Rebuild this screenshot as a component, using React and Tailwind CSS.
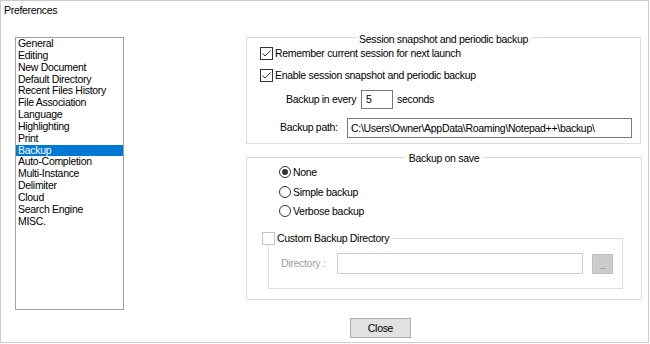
import React from 'react';

const pages = [
  'General',
  'Editing',
  'New Document',
  'Default Directory',
  'Recent Files History',
  'File Association',
  'Language',
  'Highlighting',
  'Print',
  'Backup',
  'Auto-Completion',
  'Multi-Instance',
  'Delimiter',
  'Cloud',
  'Search Engine',
  'MISC.',
];

function CheckBox({ checked, light }) {
  return (
    <span
      className={
        'w-[13px] h-[13px] shrink-0 bg-white border flex items-center justify-center ' +
        (light ? 'border-[#c4c4c4]' : 'border-[#333333]')
      }
    >
      {checked && (
        <svg width="11" height="11" viewBox="0 0 11 11">
          <polyline points="1.5,5.5 4,8 9.5,2.5" fill="none" stroke="#333333" strokeWidth="1" />
        </svg>
      )}
    </span>
  );
}

function Radio({ selected }) {
  return (
    <span className="w-[12px] h-[12px] shrink-0 rounded-full border border-[#333333] bg-white flex items-center justify-center">
      {selected && <span className="w-[6px] h-[6px] rounded-full bg-[#333333]" />}
    </span>
  );
}

function GroupTitle({ children, className }) {
  return (
    <div className={'absolute left-1/2 -translate-x-1/2 bg-white px-[3px] leading-[14px] whitespace-nowrap ' + className}>
      {children}
    </div>
  );
}

export default function App() {
  return (
    <div className="w-[650px] h-[344px] bg-white text-black font-['Liberation_Sans',Arial,sans-serif] text-[10.5px] tracking-[-0.3px]">
      <div className="w-[649px] h-[343px] border border-[#cbcbcb] flex flex-col">
        {/* Title */}
        <div className="h-[36px] pt-[2px] pl-[3px] leading-[14px]">Preferences</div>

        <div className="flex items-start">
          {/* Page list */}
          <div className="ml-[14px] w-[109px] h-[273px] border border-[#a0a0a0] bg-white">
            {pages.map((p) => (
              <div
                key={p}
                className={
                  'h-[11.85px] leading-[11.85px] pl-[2px] whitespace-nowrap ' +
                  (p === 'Backup' ? 'bg-[#0078d7] text-white' : '')
                }
              >
                {p}
              </div>
            ))}
          </div>

          {/* Right side */}
          <div className="ml-[122px] w-[396px] flex flex-col">
            {/* Session snapshot */}
            <div className="relative w-[395px] h-[107px] border border-[#dcdcdc] pl-[13px] pt-[8px]">
              <GroupTitle className="top-[-6px]">Session snapshot and periodic backup</GroupTitle>
              <div className="flex items-center gap-[2px] h-[14px] leading-[14px]">
                <CheckBox checked />
                <span>Remember current session for next launch</span>
              </div>
              <div className="flex items-center gap-[2px] h-[14px] leading-[14px] mt-[8px]">
                <CheckBox checked />
                <span>Enable session snapshot and periodic backup</span>
              </div>
              <div className="flex items-center h-[19px] mt-[8px] ml-[26px]">
                <span className="w-[75px]">Backup in every</span>
                <div className="w-[32px] h-[19px] border border-[#7a7a7a] pl-[4px] leading-[17px]">5</div>
                <span className="ml-[4px]">seconds</span>
              </div>
              <div className="flex items-center h-[20px] mt-[9px] ml-[20px]">
                <span className="w-[67px]">Backup path:</span>
                <div className="w-[285px] h-[20px] border border-[#7a7a7a] pl-[3px] leading-[18px] whitespace-nowrap">
                  C:\Users\Owner\AppData\Roaming\Notepad++\backup\
                </div>
              </div>
            </div>

            {/* Backup on save */}
            <div className="relative mt-[13px] w-[396px] h-[143px] border border-[#dcdcdc]">
              <GroupTitle className="top-[-7px]">Backup on save</GroupTitle>
              <div className="pl-[32px] pt-[7px] flex flex-col">
                <div className="flex items-center gap-[2px] h-[14px] leading-[14px]">
                  <Radio selected />
                  <span>None</span>
                </div>
                <div className="flex items-center gap-[2px] h-[14px] leading-[14px] mt-[6px]">
                  <Radio />
                  <span>Simple backup</span>
                </div>
                <div className="flex items-center gap-[2px] h-[14px] leading-[14px] mt-[5px]">
                  <Radio />
                  <span>Verbose backup</span>
                </div>
              </div>

              <div className="relative ml-[21px] mt-[20px] w-[355px] h-[51px] border border-[#dcdcdc]">
                <div className="absolute top-[-8px] left-[-7px] bg-white pr-[3px] flex items-center gap-[2px] h-[14px] leading-[14px]">
                  <CheckBox light />
                  <span>Custom Backup Directory</span>
                </div>
                <div className="flex items-center mt-[14px] pl-[12px]">
                  <span className="w-[56px] text-[#a0a0a0]">Directory :</span>
                  <div className="w-[246px] h-[21px] border border-[#cccccc] bg-white" />
                  <div className="ml-[9px] w-[21px] h-[20px] bg-[#cccccc] border border-[#bfbfbf] flex items-end justify-center text-[9px] leading-[14px] text-[#7a7a7a]">
                    ...
                  </div>
                </div>
              </div>
            </div>
          </div>
        </div>

        {/* Close */}
        <button className="mt-[8px] ml-[349px] w-[61px] h-[20px] bg-[#e1e1e1] border border-[#adadad] leading-[18px] text-center">
          Close
        </button>
      </div>
    </div>
  );
}
